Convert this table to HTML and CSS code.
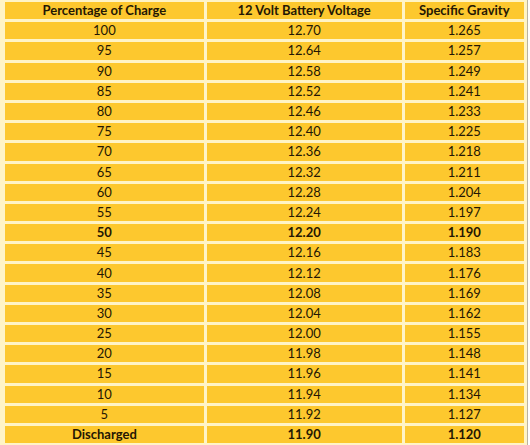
FILE: index.html
```html
<!DOCTYPE html>
<html>
<head>
<meta charset="utf-8">
<link rel="stylesheet" href="styles.css">
</head>
<body>
<div class="wrap">
<table class="chart">
  <colgroup><col class="c1"><col class="c2"><col class="c3"></colgroup>
  <thead>
    <tr><th>Percentage of Charge</th><th>12 Volt Battery Voltage</th><th>Specific Gravity</th></tr>
  </thead>
  <tbody>
    <tr><td>100</td><td>12.70</td><td>1.265</td></tr>
    <tr><td>95</td><td>12.64</td><td>1.257</td></tr>
    <tr><td>90</td><td>12.58</td><td>1.249</td></tr>
    <tr><td>85</td><td>12.52</td><td>1.241</td></tr>
    <tr><td>80</td><td>12.46</td><td>1.233</td></tr>
    <tr><td>75</td><td>12.40</td><td>1.225</td></tr>
    <tr><td>70</td><td>12.36</td><td>1.218</td></tr>
    <tr><td>65</td><td>12.32</td><td>1.211</td></tr>
    <tr><td>60</td><td>12.28</td><td>1.204</td></tr>
    <tr><td>55</td><td>12.24</td><td>1.197</td></tr>
    <tr class="bold"><td>50</td><td>12.20</td><td>1.190</td></tr>
    <tr><td>45</td><td>12.16</td><td>1.183</td></tr>
    <tr><td>40</td><td>12.12</td><td>1.176</td></tr>
    <tr><td>35</td><td>12.08</td><td>1.169</td></tr>
    <tr><td>30</td><td>12.04</td><td>1.162</td></tr>
    <tr><td>25</td><td>12.00</td><td>1.155</td></tr>
    <tr><td>20</td><td>11.98</td><td>1.148</td></tr>
    <tr><td>15</td><td>11.96</td><td>1.141</td></tr>
    <tr><td>10</td><td>11.94</td><td>1.134</td></tr>
    <tr><td>5</td><td>11.92</td><td>1.127</td></tr>
    <tr class="bold"><td>Discharged</td><td>11.90</td><td>1.120</td></tr>
  </tbody>
</table>
</div>
</body>
</html>
```
FILE: styles.css
```css
html, body {
  margin: 0;
  padding: 0;
  background: #ffffff;
}
.wrap {
  width: 528px;
  height: 445px;
  background: #fff4c6;
  border-right: 1px solid #b9b3a0;
  box-sizing: border-box;
  padding: 1px 0 0 2px;
}
.chart {
  border-collapse: separate;
  border-spacing: 3px;
  margin: -2px 0 0 0;
  font-family: "Lato", "Open Sans", sans-serif;
  font-size: 13px;
  color: #241703;
  table-layout: fixed;
  width: 525px;
}
.c1 { width: 198px; }
.c2 { width: 194px; }
.c3 { width: 119px; }
.chart th, .chart td {
  background: #fdc82e;
  text-align: center;
  padding: 0;
  height: 17.2px;
  line-height: 17px;
}
.chart th {
  font-weight: 700;
}
.chart tr.bold td {
  font-weight: 700;
}
```
